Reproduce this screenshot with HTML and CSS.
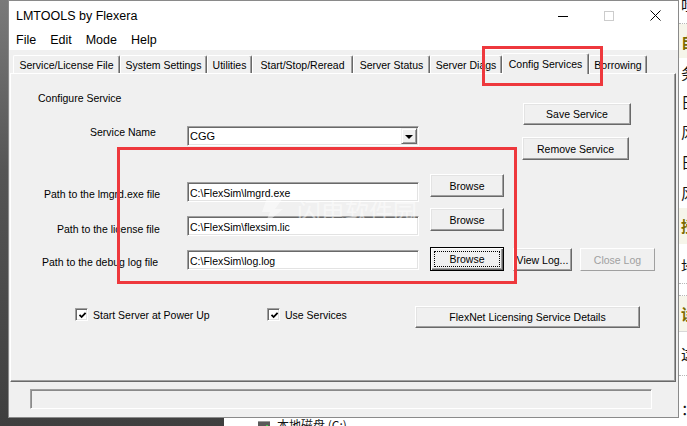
FILE: index.html
```html
<!DOCTYPE html>
<html>
<head>
<meta charset="utf-8">
<title>LMTOOLS by Flexera</title>
<link rel="stylesheet" href="styles.css">
</head>
<body>
<div class="desk">
  <div class="bg-right">
    <div class="rr rr1 dot">吐</div>
    <div class="rr rr2 band">自</div>
    <div class="rr rr3">务</div>
    <div class="rr rr4">日</div>
    <div class="rr rr4">风</div>
    <div class="rr rr4">日</div>
    <div class="rr rr5">风</div>
    <div class="rr rr6 band">授</div>
    <div class="rr rr7 dot">地</div>
    <div class="rr rr8 dot"></div>
    <div class="rr rr6 band line">设</div>
    <div class="rr rr9 dot">这</div>
    <div class="rr rr10">：</div>
  </div>
  <div class="bg-bottom">
    <span class="drive"><span class="drive-led"></span></span>
    <span class="drive-label">本地磁盘 (C:)</span>
  </div>

  <div class="window">
    <div class="titlebar">
      <span class="title">LMTOOLS by Flexera</span>
      <div class="caption">
        <span class="cbtn"><svg width="10" height="10" viewBox="0 0 10 10"><path d="M0 5.5H10" stroke="#000" stroke-width="1"/></svg></span>
        <span class="cbtn"><svg width="10" height="10" viewBox="0 0 10 10"><rect x="0.5" y="0.5" width="9" height="9" fill="none" stroke="#cccccc"/></svg></span>
        <span class="cbtn"><svg width="11" height="11" viewBox="0 0 11 11"><path d="M0.5 0.5L10.5 10.5M10.5 0.5L0.5 10.5" stroke="#000" stroke-width="1"/></svg></span>
      </div>
    </div>
    <div class="menubar">
      <span>File</span><span>Edit</span><span>Mode</span><span>Help</span>
    </div>
    <div class="tabstrip">
      <div class="tab w1">Service/License File</div>
      <div class="tab w2">System Settings</div>
      <div class="tab w3">Utilities</div>
      <div class="tab w4">Start/Stop/Reread</div>
      <div class="tab w5">Server Status</div>
      <div class="tab w6">Server Diags</div>
      <div class="tab w7 selected">Config Services</div>
      <div class="tab w8">Borrowing</div>
    </div>
    <div class="panel">
      <div class="form">
        <div class="lbl lbl-cfg">Configure Service</div>
        <div class="btn btn-save">Save Service</div>

        <div class="lbl lbl-name">Service Name</div>
        <div class="combo"><span class="combo-text">CGG</span><span class="combo-btn"><span class="arrow"></span></span></div>
        <div class="btn btn-remove">Remove Service</div>

        <div class="lbl lbl-l1">Path to the lmgrd.exe file</div>
        <div class="edit edit-1">C:\FlexSim\lmgrd.exe</div>
        <div class="btn browse browse-1">Browse</div>

        <div class="lbl lbl-l2">Path to the license file</div>
        <div class="edit edit-2">C:\FlexSim\flexsim.lic</div>
        <div class="btn browse browse-2">Browse</div>

        <div class="lbl lbl-l3">Path to the debug log file</div>
        <div class="edit edit-3">C:\FlexSim\log.log</div>
        <div class="btn browse browse-3 focused">Browse</div>
        <div class="btn btn-view">View Log...</div>
        <div class="btn btn-close disabled">Close Log</div>
      </div>
      <div class="checks">
        <div class="chk chk-1"><span class="box"><svg width="9" height="9" viewBox="0 0 9 9"><path d="M1.5 3.8L3.6 6L7.6 1.8" fill="none" stroke="#000" stroke-width="1.8"/></svg></span><span>Start Server at Power Up</span></div>
        <div class="chk chk-2"><span class="box"><svg width="9" height="9" viewBox="0 0 9 9"><path d="M1.5 3.8L3.6 6L7.6 1.8" fill="none" stroke="#000" stroke-width="1.8"/></svg></span><span>Use Services</span></div>
        <div class="btn btn-flex">FlexNet Licensing Service Details</div>
      </div>
    </div>
    <div class="status"></div>
  </div>

  <div class="watermark">
    <svg width="40" height="28" viewBox="0 0 40 28"><path d="M14 1H30L22 12H30L12 27L17 15H9Z" fill="#ffffff"/></svg>
    <span class="wm-text">闪电软件园</span>
  </div>
  <div class="mark mark-tab"></div>
  <div class="mark mark-paths"></div>
</div>
</body>
</html>
```

FILE: styles.css
```css
* { box-sizing: border-box; }
html, body { margin: 0; padding: 0; }
body {
  width: 687px;
  height: 426px;
  overflow: hidden;
  font-family: "Liberation Sans", Arial, sans-serif;
  color: #000;
}
.desk {
  position: relative;
  width: 687px;
  height: 426px;
  background: linear-gradient(#7a7a7a, #555555 40%, #3f3f3f);
}

/* windows behind */
.bg-right {
  position: absolute;
  left: 679px;
  top: 0;
  width: 8px;
  height: 426px;
  background: #fff;
  overflow: hidden;
  display: flex;
  flex-direction: column;
  font-family: "Noto Sans CJK SC", sans-serif;
  font-size: 15px;
  color: #111;
}
.rr { flex: none; padding-left: 2px; white-space: nowrap; }
.rr1 { height: 24px; line-height: 10px; }
.rr2 { height: 34px; line-height: 36px; }
.rr3 { height: 29px; line-height: 29px; }
.rr4 { height: 30px; line-height: 30px; }
.rr5 { height: 31px; line-height: 31px; }
.rr6 { height: 36px; line-height: 36px; }
.rr7 { height: 40px; line-height: 44px; }
.rr8 { height: 12px; }
.rr9 { height: 44px; line-height: 44px; }
.rr10 { height: 60px; line-height: 66px; }
.dot { border-bottom: 1px dotted #b8b8b8; }
.band { background: #f6f5ea; color: #7d6b00; font-weight: bold; }
.line { border-bottom: 1px solid #d8d8d8; }

.bg-bottom {
  position: absolute;
  left: 224px;
  top: 418px;
  right: 0;
  height: 8px;
  background: #fff;
  overflow: hidden;
  display: flex;
  align-items: flex-start;
  padding-left: 34px;
  font-family: "Noto Sans CJK SC", sans-serif;
  font-size: 12px;
  color: #111;
}
.drive {
  width: 12px;
  height: 7px;
  margin-top: 3px;
  background: #5a5a5a;
  border-top: 1px solid #9a9a9a;
  position: relative;
}
.drive-led {
  display: block;
  width: 2px;
  height: 2px;
  background: #3fd34a;
  margin: 3px 0 0 8px;
}
.drive-label { margin-left: 7px; line-height: 14px; margin-top: 0; }

/* main window */
.window {
  position: absolute;
  left: 8px;
  top: 0;
  width: 671px;
  height: 418px;
  border: 1px solid #8a8a8a;
  background: #f0f0f0;
  display: flex;
  flex-direction: column;
}
.titlebar {
  height: 29px;
  flex: none;
  background: #fff;
  display: flex;
  align-items: center;
  padding-left: 7px;
}
.title { font-size: 12.5px; }
.caption { margin-left: auto; display: flex; height: 29px; }
.cbtn {
  width: 46px;
  height: 29px;
  display: flex;
  align-items: center;
  justify-content: center;
}
.menubar {
  height: 20px;
  flex: none;
  background: #fff;
  display: flex;
  align-items: center;
  gap: 14px;
  padding-left: 7px;
  font-size: 12.5px;
}
.tabstrip {
  height: 23px;
  flex: none;
  display: flex;
  align-items: flex-end;
  padding-left: 4px;
  font-size: 10.5px;
}
.tab {
  flex: none;
  height: 18px;
  display: flex;
  align-items: center;
  justify-content: center;
  padding-top: 1px;
  background: #f0f0f0;
  border-top: 1px solid #fff;
  border-left: 1px solid #fff;
  border-right: 1px solid #696969;
  box-shadow: inset -1px 0 #a0a0a0;
  border-radius: 2px 2px 0 0;
  white-space: nowrap;
}
.w1 { width: 107px; }
.w2 { width: 87px; }
.w3 { width: 45px; }
.w4 { width: 101px; }
.w5 { width: 77px; }
.w6 { width: 72px; }
.w7 { width: 87px; }
.w8 { width: 58px; }
.tab.selected {
  height: 21px;
  margin-bottom: -1px;
  position: relative;
  z-index: 1;
  padding-top: 0;
  padding-bottom: 1px;
}

.panel {
  flex: none;
  margin-left: 1px;
  width: 666px;
  height: 309px;
  border: 1px solid;
  border-color: #fff #696969 #696969 #fff;
  box-shadow: inset -1px -1px #a0a0a0;
  font-size: 10.5px;
}
.form {
  display: grid;
  grid-template-columns: 176px 232px 11px 74px 9px 59px 8px 75px;
  grid-template-rows: 52px 46px 36px 37px 55px;
}
.form > * { align-self: start; justify-self: start; }
.lbl { line-height: 13px; white-space: nowrap; grid-column: 1; }
.lbl-cfg { grid-row: 1; margin: 18px 0 0 27px; }
.lbl-name { grid-row: 2; margin: 0 0 0 79px; }
.lbl-l1 { grid-row: 3; margin: 16px 0 0 33px; }
.lbl-l2 { grid-row: 4; margin: 15px 0 0 46px; }
.lbl-l3 { grid-row: 5; margin: 11px 0 0 31px; }

.btn {
  display: flex;
  align-items: center;
  justify-content: center;
  background: #f0f0f0;
  border: 1px solid;
  border-color: #fff #696969 #696969 #fff;
  box-shadow: inset -1px -1px #a0a0a0, inset 1px 1px #e3e3e3;
  white-space: nowrap;
  height: 23px;
}
.btn-save { grid-row: 1; grid-column: 6 / span 3; margin: 29px 0 0 10px; width: 108px; height: 22px; }
.btn-remove { grid-row: 2; grid-column: 6 / span 3; margin: 11px 0 0 9px; width: 107px; }
.browse { grid-column: 4; width: 74px; }
.browse-1 { grid-row: 3; margin-top: 2px; }
.browse-2 { grid-row: 4; margin-top: 0; }
.browse-3 { grid-row: 5; margin-top: 2px; height: 24px; }
.btn-view { grid-row: 5; grid-column: 6; width: 59px; margin-top: 3px; }
.btn-close { grid-row: 5; grid-column: 8; width: 75px; margin-top: 3px; }
.focused {
  position: relative;
  border: 1px solid #000;
  box-shadow: inset 1px 1px #fff, inset -1px -1px #696969, inset -2px -2px #a0a0a0;
}
.focused::after {
  content: "";
  position: absolute;
  left: 3px;
  top: 3px;
  right: 3px;
  bottom: 3px;
  border: 1px dotted #000;
}
.disabled {
  color: #a0a0a0;
  border-color: #fff #a0a0a0 #a0a0a0 #fff;
  box-shadow: none;
}

.edit, .combo {
  grid-column: 2;
  width: 232px;
  height: 20px;
  background: #fff;
  border: 1px solid;
  border-color: #a0a0a0 #fff #fff #a0a0a0;
  box-shadow: inset 1px 1px #696969, inset -1px -1px #e3e3e3;
  display: flex;
  align-items: center;
  white-space: nowrap;
  overflow: hidden;
}
.edit { padding: 1px 0 0 2px; }
.edit-1 { grid-row: 3; margin-top: 10px; }
.edit-2 { grid-row: 4; margin-top: 8px; }
.edit-3 { grid-row: 5; margin-top: 5px; }
.combo { grid-row: 2; padding: 1px; font-size: 11px; }
.combo-text { flex: 1; padding-left: 1px; }
.combo-btn {
  width: 16px;
  height: 16px;
  background: #f0f0f0;
  border: 1px solid;
  border-color: #f0f0f0 #696969 #696969 #f0f0f0;
  box-shadow: inset 1px 1px #fff, inset -1px -1px #a0a0a0;
  display: flex;
  align-items: center;
  justify-content: center;
}
.arrow {
  width: 0;
  height: 0;
  border-left: 4px solid transparent;
  border-right: 4px solid transparent;
  border-top: 4px solid #000;
  margin-top: 1px;
}

.checks {
  display: flex;
  align-items: flex-start;
  height: 40px;
}
.chk {
  display: flex;
  align-items: center;
  gap: 5px;
  margin-top: 8px;
  height: 13px;
  white-space: nowrap;
}
.chk-1 { margin-left: 64px; width: 192px; }
.chk-2 { width: 148px; }
.box {
  width: 13px;
  height: 13px;
  flex: none;
  background: #fff;
  border: 1px solid;
  border-color: #a0a0a0 #fff #fff #a0a0a0;
  box-shadow: inset 1px 1px #696969, inset -1px -1px #e3e3e3;
  display: flex;
  align-items: center;
  justify-content: center;
  padding: 1px 0 0 1px;
}
.btn-flex { width: 225px; height: 22px; margin-top: 6px; }

.status {
  flex: none;
  margin: 7px 0 0 21px;
  width: 622px;
  height: 20px;
  border: 1px solid;
  border-color: #a0a0a0 #fff #fff #a0a0a0;
  box-shadow: inset 1px 1px #8a8a8a;
}

/* overlays */
.watermark {
  position: absolute;
  left: 253px;
  top: 197px;
  display: flex;
  align-items: center;
  gap: 4px;
  opacity: 0.5;
  pointer-events: none;
}
.wm-text {
  font-family: "Noto Sans CJK SC", sans-serif;
  font-size: 24px;
  line-height: 28px;
  color: #fff;
}
.mark {
  position: absolute;
  border: 3px solid #ee383d;
  pointer-events: none;
}
.mark-tab { left: 482px; top: 46px; width: 121px; height: 40px; }
.mark-paths { left: 117px; top: 147px; width: 400px; height: 137px; }
```
